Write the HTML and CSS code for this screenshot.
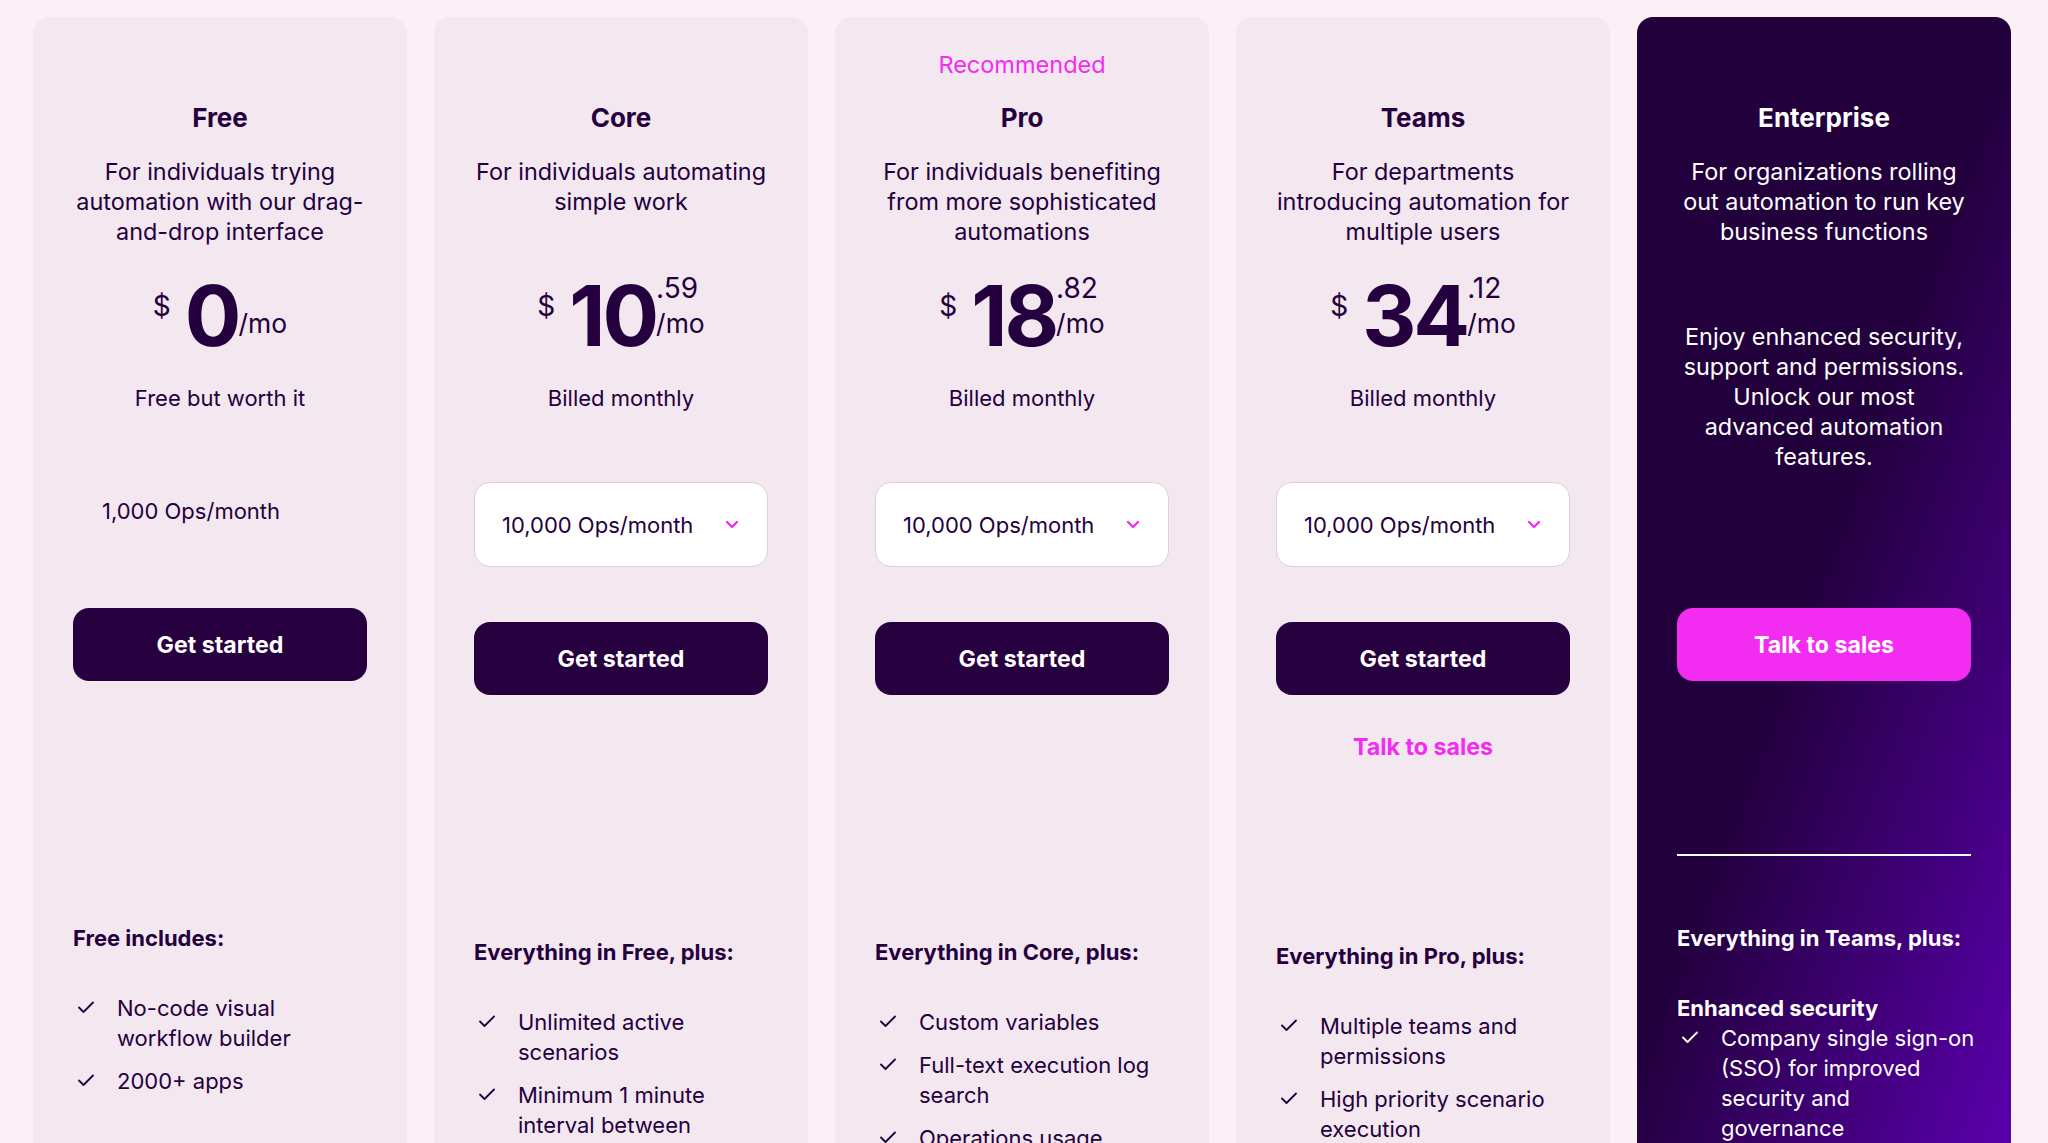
FILE: index.html
```html
<!DOCTYPE html>
<html>
    <head>
        <link rel="stylesheet" href="styles.css">
    </head>
    <body>
        <div class="page">
            <div class="plans">

                <div class="plan plan-free">
                    <p class="tag"></p>
                    <h2 class="name">Free</h2>
                    <p class="desc">For individuals trying<br>automation with our drag-<br>and-drop interface</p>
                    <div class="price">
                        <span class="cur">$</span>
                        <span class="amount">0</span>
                        <span class="suffix"><span class="cents"></span><span class="per">/mo</span></span>
                    </div>
                    <p class="note">Free but worth it</p>
                    <p class="ops">1,000 Ops/month</p>
                    <a class="btn" href="#">Get started</a>
                    <div class="extra"></div>
                    <h3 class="incl">Free includes:</h3>
                    <ul class="feats">
                        <li><svg viewBox="0 0 16 30"><polyline points="1,14.5 5.5,19 15,9.5"/></svg><span>No-code visual workflow builder</span></li>
                        <li><svg viewBox="0 0 16 30"><polyline points="1,14.5 5.5,19 15,9.5"/></svg><span>2000+ apps</span></li>
                    </ul>
                </div>

                <div class="plan">
                    <p class="tag"></p>
                    <h2 class="name">Core</h2>
                    <p class="desc">For individuals automating<br>simple work</p>
                    <div class="price">
                        <span class="cur">$</span>
                        <span class="amount">10</span>
                        <span class="suffix"><span class="cents">.59</span><span class="per">/mo</span></span>
                    </div>
                    <p class="note">Billed monthly</p>
                    <div class="select">
                        <span>10,000 Ops/month</span>
                        <svg class="chev" viewBox="0 0 14 9"><polyline points="2,2 7,7 12,2"/></svg>
                    </div>
                    <a class="btn" href="#">Get started</a>
                    <div class="extra"></div>
                    <h3 class="incl">Everything in Free, plus:</h3>
                    <ul class="feats">
                        <li><svg viewBox="0 0 16 30"><polyline points="1,14.5 5.5,19 15,9.5"/></svg><span>Unlimited active scenarios</span></li>
                        <li><svg viewBox="0 0 16 30"><polyline points="1,14.5 5.5,19 15,9.5"/></svg><span>Minimum 1 minute interval between scheduled executions</span></li>
                        <li><svg viewBox="0 0 16 30"><polyline points="1,14.5 5.5,19 15,9.5"/></svg><span>Increased data transfer limits</span></li>
                        <li><svg viewBox="0 0 16 30"><polyline points="1,14.5 5.5,19 15,9.5"/></svg><span>Connect to apps with our Make API</span></li>
                    </ul>
                </div>

                <div class="plan">
                    <p class="tag">Recommended</p>
                    <h2 class="name">Pro</h2>
                    <p class="desc">For individuals benefiting<br>from more sophisticated<br>automations</p>
                    <div class="price">
                        <span class="cur">$</span>
                        <span class="amount">18</span>
                        <span class="suffix"><span class="cents">.82</span><span class="per">/mo</span></span>
                    </div>
                    <p class="note">Billed monthly</p>
                    <div class="select">
                        <span>10,000 Ops/month</span>
                        <svg class="chev" viewBox="0 0 14 9"><polyline points="2,2 7,7 12,2"/></svg>
                    </div>
                    <a class="btn" href="#">Get started</a>
                    <div class="extra"></div>
                    <h3 class="incl">Everything in Core, plus:</h3>
                    <ul class="feats">
                        <li><svg viewBox="0 0 16 30"><polyline points="1,14.5 5.5,19 15,9.5"/></svg><span>Custom variables</span></li>
                        <li><svg viewBox="0 0 16 30"><polyline points="1,14.5 5.5,19 15,9.5"/></svg><span>Full-text execution log search</span></li>
                        <li><svg viewBox="0 0 16 30"><polyline points="1,14.5 5.5,19 15,9.5"/></svg><span>Operations usage flexibility</span></li>
                        <li><svg viewBox="0 0 16 30"><polyline points="1,14.5 5.5,19 15,9.5"/></svg><span>Priority scenario execution</span></li>
                    </ul>
                </div>

                <div class="plan plan-teams">
                    <p class="tag"></p>
                    <h2 class="name">Teams</h2>
                    <p class="desc">For departments<br>introducing automation for<br>multiple users</p>
                    <div class="price">
                        <span class="cur">$</span>
                        <span class="amount">34</span>
                        <span class="suffix"><span class="cents">.12</span><span class="per">/mo</span></span>
                    </div>
                    <p class="note">Billed monthly</p>
                    <div class="select">
                        <span>10,000 Ops/month</span>
                        <svg class="chev" viewBox="0 0 14 9"><polyline points="2,2 7,7 12,2"/></svg>
                    </div>
                    <a class="btn" href="#">Get started</a>
                    <div class="extra"><a class="talk" href="#">Talk to sales</a></div>
                    <h3 class="incl">Everything in Pro, plus:</h3>
                    <ul class="feats">
                        <li><svg viewBox="0 0 16 30"><polyline points="1,14.5 5.5,19 15,9.5"/></svg><span>Multiple teams and permissions</span></li>
                        <li><svg viewBox="0 0 16 30"><polyline points="1,14.5 5.5,19 15,9.5"/></svg><span>High priority scenario execution</span></li>
                        <li><svg viewBox="0 0 16 30"><polyline points="1,14.5 5.5,19 15,9.5"/></svg><span>Create and share scenario templates</span></li>
                    </ul>
                </div>

                <div class="plan plan-ent">
                    <p class="tag"></p>
                    <h2 class="name">Enterprise</h2>
                    <p class="desc">For organizations rolling<br>out automation to run key<br>business functions</p>
                    <p class="pitch">Enjoy enhanced security,<br>support and permissions.<br>Unlock our most<br>advanced automation<br>features.</p>
                    <a class="btn" href="#">Talk to sales</a>
                    <div class="extra"><div class="rule"></div></div>
                    <h3 class="incl">Everything in Teams, plus:</h3>
                    <div class="feats">
                        <h4 class="group">Enhanced security</h4>
                        <ul class="sub">
                            <li><svg viewBox="0 0 16 30"><polyline points="1,14.5 5.5,19 15,9.5"/></svg><span>Company single sign-on<br>(SSO) for improved<br>security and<br>governance</span></li>
                            <li><svg viewBox="0 0 16 30"><polyline points="1,14.5 5.5,19 15,9.5"/></svg><span>Audit log</span></li>
                        </ul>
                    </div>
                </div>

            </div>
        </div>
    </body>
</html>
```

FILE: styles.css
```css
*{
    box-sizing: border-box;
}
body{
    margin: 0;
    background-color: #fcf0f7;
    color: #25003e;
    font-family: Inter, "Noto Sans", sans-serif;
}
.page{
    height: 100vh;
    overflow: hidden;
}
.plans{
    display: grid;
    grid-template-columns: repeat(5, 374px);
    gap: 27px;
    padding: 17px 0 0 33px;
}
.plan{
    background-color: #f3e7f0;
    border-radius: 16px;
    padding: 35px 40px 120px;
    display: flex;
    flex-direction: column;
    text-align: center;
}
.tag{
    height: 26px;
    margin: 0;
    font-size: 23.5px;
    line-height: 26px;
    color: #f22cf0;
}
.name{
    margin: 23px 0 0;
    font-size: 26px;
    line-height: 34px;
    font-weight: 700;
}
.desc{
    margin: 22px -14px 0;
    min-height: 90px;
    font-size: 23.4px;
    line-height: 30px;
}
.price{
    margin-top: 27px;
    height: 84px;
    display: flex;
    justify-content: center;
    align-items: flex-start;
}
.cur{
    margin: 18px 14px 0 0;
    font-size: 28px;
    line-height: 28px;
}
.amount{
    font-size: 84px;
    line-height: 84px;
    font-weight: 700;
    letter-spacing: -3px;
}
.suffix{
    display: flex;
    flex-direction: column;
    align-items: flex-start;
    font-size: 28px;
    line-height: 28px;
}
.cents{
    height: 35px;
}
.per{
    font-size: 26.5px;
}
.note{
    margin: 25px 0 0;
    font-size: 22px;
    line-height: 30px;
}
.ops{
    margin: 83px 0 0;
    padding-left: 29px;
    text-align: left;
    font-size: 22px;
    line-height: 30px;
}
.select{
    margin-top: 69px;
    height: 85px;
    background-color: #fff;
    border: 1px solid #dccfd9;
    border-radius: 16px;
    display: flex;
    align-items: center;
    justify-content: space-between;
    padding: 0 28px 0 27px;
    font-size: 22px;
    line-height: 30px;
}
.chev{
    width: 14px;
    height: 9px;
    fill: none;
    stroke: #f22cf0;
    stroke-width: 2.4;
    stroke-linecap: round;
    stroke-linejoin: round;
}
.btn{
    margin-top: 55px;
    height: 73px;
    display: flex;
    align-items: center;
    justify-content: center;
    border-radius: 16px;
    background-color: #27003f;
    color: #fff;
    font-size: 23.2px;
    font-weight: 700;
    text-decoration: none;
}
.plan-free .btn{
    margin-top: 82px;
}
.extra{
    height: 242px;
}
.plan-teams .extra{
    height: 246px;
}
.talk{
    display: block;
    margin-top: 37px;
    color: #f22cf0;
    font-size: 23.2px;
    line-height: 30px;
    font-weight: 700;
    text-decoration: none;
}
.rule{
    margin-top: 173px;
    height: 2px;
    background-color: #fff;
}
.incl{
    margin: 0;
    text-align: left;
    font-size: 22px;
    line-height: 30px;
    font-weight: 700;
}
.feats{
    list-style: none;
    margin: 40px 0 0;
    padding: 0;
    text-align: left;
}
.feats li{
    display: flex;
    gap: 23px;
    margin-bottom: 13px;
    font-size: 22px;
    line-height: 30px;
}
.feats li span{
    max-width: 240px;
}
.feats svg{
    flex: none;
    width: 16px;
    height: 30px;
    margin-left: 5px;
    fill: none;
    stroke: currentColor;
    stroke-width: 1.8;
    stroke-linecap: round;
    stroke-linejoin: round;
}

/* enterprise card */
.plan-ent{
    background: linear-gradient(110deg, #22003c 48%, #5a00ad 100%) top / 100% 1130px no-repeat, #22003c;
    color: #fff;
}
.pitch{
    margin: 75px -14px 0;
    font-size: 23.4px;
    line-height: 30px;
}
.plan-ent .btn{
    margin-top: 136px;
    background-color: #f22cf0;
}
.group{
    margin: 0;
    font-size: 22px;
    line-height: 30px;
    font-weight: 700;
}
.sub{
    list-style: none;
    margin: 0 -10px 0 0;
    padding: 0;
}
.plan-ent .feats li span{
    max-width: none;
}
```
